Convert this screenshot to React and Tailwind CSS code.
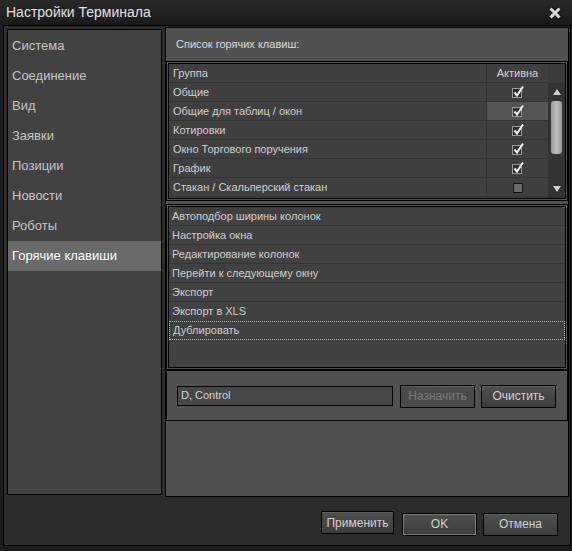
import React from 'react';

const menu = ['Система', 'Соединение', 'Вид', 'Заявки', 'Позиции', 'Новости', 'Роботы', 'Горячие клавиши'];

const groups = [
  { name: 'Общие', on: true },
  { name: 'Общие для таблиц / окон', on: true, hot: true },
  { name: 'Котировки', on: true },
  { name: 'Окно Торгового поручения', on: true },
  { name: 'График', on: true },
  { name: 'Стакан / Скальперский стакан', on: false },
];

const actions = [
  'Автоподбор ширины колонок',
  'Настройка окна',
  'Редактирование колонок',
  'Перейти к следующему окну',
  'Экспорт',
  'Экспорт в XLS',
  'Дублировать',
];

const Check = ({ on }) =>
  on ? (
    <svg width="14" height="14" viewBox="0 0 14 14">
      <rect x="1.5" y="3.5" width="9" height="9" fill="#2e2e2e" stroke="#9a9a9a" />
      <path d="M3.5 7.5 L6 10.5 L12 1.5" fill="none" stroke="#f2f2f2" strokeWidth="2" />
    </svg>
  ) : (
    <svg width="14" height="14" viewBox="0 0 14 14">
      <rect x="2.5" y="3.5" width="9" height="9" fill="#6a6a6a" stroke="#111" />
    </svg>
  );

const Btn = ({ children, w, focus, disabled }) => (
  <button
    className={
      'h-[23px] border border-black text-[12px] ' +
      (disabled
        ? 'bg-[#4a4a4a] text-[#7a7a7a] border-[#333]'
        : 'bg-gradient-to-b from-[#505050] to-[#3c3c3c] text-[#d0d0d0]') +
      (focus ? ' shadow-[inset_0_0_0_1px_#7a7a7a]' : ' shadow-[inset_0_1px_0_#5e5e5e]')
    }
    style={{ width: w }}
  >
    {children}
  </button>
);

export default function App() {
  return (
    <div className="w-[572px] h-[551px] bg-[#1c1c1c] overflow-hidden font-['Liberation_Sans',Arial,sans-serif] select-none">
      {/* title bar */}
      <div className="h-[25px] flex items-center justify-between pl-[6px] pr-[10px] bg-gradient-to-b from-[#2a2a2a] to-[#191919]">
        <span className="text-[14px] text-[#e2e2e2]">Настройки Терминала</span>
        <svg width="14" height="14" viewBox="0 0 14 14">
          <path d="M2 2 L12 12 M12 2 L2 12" stroke="#111" strokeWidth="5" />
          <path d="M2.5 2.5 L11.5 11.5 M11.5 2.5 L2.5 11.5" stroke="#d8d8d8" strokeWidth="3" />
        </svg>
      </div>

      {/* body */}
      <div className="ml-[3px] w-[568px] h-[521px] border border-black bg-[#2c2c2c] flex flex-col">
        <div className="flex items-start">
          {/* left menu */}
          <div className="mt-[3px] ml-[3px] w-[155px] h-[466px] border border-black bg-[#424242] pt-px">
            {menu.map((m, i) => (
              <div
                key={m}
                className={
                  'h-[30px] flex items-center pl-[4px] text-[13px] ' +
                  (i === menu.length - 1 ? 'bg-[#6a6a6a] text-white' : 'text-[#c6c6c6]')
                }
              >
                {m}
              </div>
            ))}
          </div>

          {/* right panel */}
          <div className="ml-[3px] mt-px w-[404px] h-[470px] border border-black bg-[#515151] flex flex-col">
            <div className="h-[33px] flex items-center pl-[10px] text-[11px] text-[#dcdcdc]">
              Список горячих клавиш:
            </div>

            {/* groups table */}
            <div className="border border-black p-px">
              <div className="border border-black bg-[#3f3f3f] flex">
                <div className="flex-1 text-[11px] text-[#d0d0d0]">
                  <div className="h-[19px] flex border-b border-[#333]">
                    <div className="w-[318px] pl-[4px] flex items-center border-r border-[#333]">Группа</div>
                    <div className="flex-1 flex items-center justify-center text-[#d8d2c2]">Активна</div>
                  </div>
                  {groups.map((g) => (
                    <div key={g.name} className="h-[19px] flex border-b border-[#353535]">
                      <div className="w-[318px] pl-[4px] flex items-center border-r border-[#333]">{g.name}</div>
                      <div className={'flex-1 flex items-center justify-center ' + (g.hot ? 'bg-[#545454]' : '')}>
                        <Check on={g.on} />
                      </div>
                    </div>
                  ))}
                  <div className="h-[1px]" />
                </div>
                {/* scrollbar */}
                <div className="w-[17px] bg-[#333] flex flex-col items-center">
                  <div className="h-[19px] w-full bg-[#3a3a3a]" />
                  <div className="h-[18px] flex items-center">
                    <svg width="8" height="6" viewBox="0 0 8 6">
                      <path d="M0 6 L4 0 L8 6 Z" fill="#d0d0d0" />
                    </svg>
                  </div>
                  <div className="w-[11px] h-[53px] rounded-[3px] bg-gradient-to-r from-[#9a9a9a] via-[#bdbdbd] to-[#9a9a9a]" />
                  <div className="flex-1" />
                  <div className="h-[18px] flex items-center">
                    <svg width="8" height="6" viewBox="0 0 8 6">
                      <path d="M0 0 L8 0 L4 6 Z" fill="#d0d0d0" />
                    </svg>
                  </div>
                </div>
              </div>
            </div>

            {/* actions list */}
            <div className="mt-[3px] border border-black p-px">
              <div className="h-[162px] border border-black bg-[#414141] text-[11px] text-[#d0d0d0]">
                {actions.map((a, i) => (
                  <div
                    key={a}
                    className={
                      'h-[19px] flex items-center pl-[3px] ' +
                      (i === actions.length - 1
                        ? 'border border-dotted border-[#b0b0b0]'
                        : i === actions.length - 2
                        ? ''
                        : 'border-b border-[#353535]')
                    }
                  >
                    {a}
                  </div>
                ))}
              </div>
            </div>

            {/* assign row */}
            <div className="h-[51px] border border-black flex items-center pl-[10px] pr-[11px]">
              <div className="w-[218px] h-[20px] border border-black bg-[#474747] flex items-center pl-[3px] text-[11px] text-[#d6d6d6]">
                D, Control
              </div>
              <div className="ml-[7px]">
                <Btn w={75} disabled>Назначить</Btn>
              </div>
              <div className="ml-[6px]">
                <Btn w={75}>Очистить</Btn>
              </div>
            </div>
          </div>
        </div>

        {/* footer */}
        <div className="mt-[14px] flex justify-end pr-[12px]">
          <Btn w={73}>Применить</Btn>
          <div className="ml-[8px]">
            <Btn w={75} focus>OK</Btn>
          </div>
          <div className="ml-[6px]">
            <Btn w={75}>Отмена</Btn>
          </div>
        </div>
      </div>
    </div>
  );
}
